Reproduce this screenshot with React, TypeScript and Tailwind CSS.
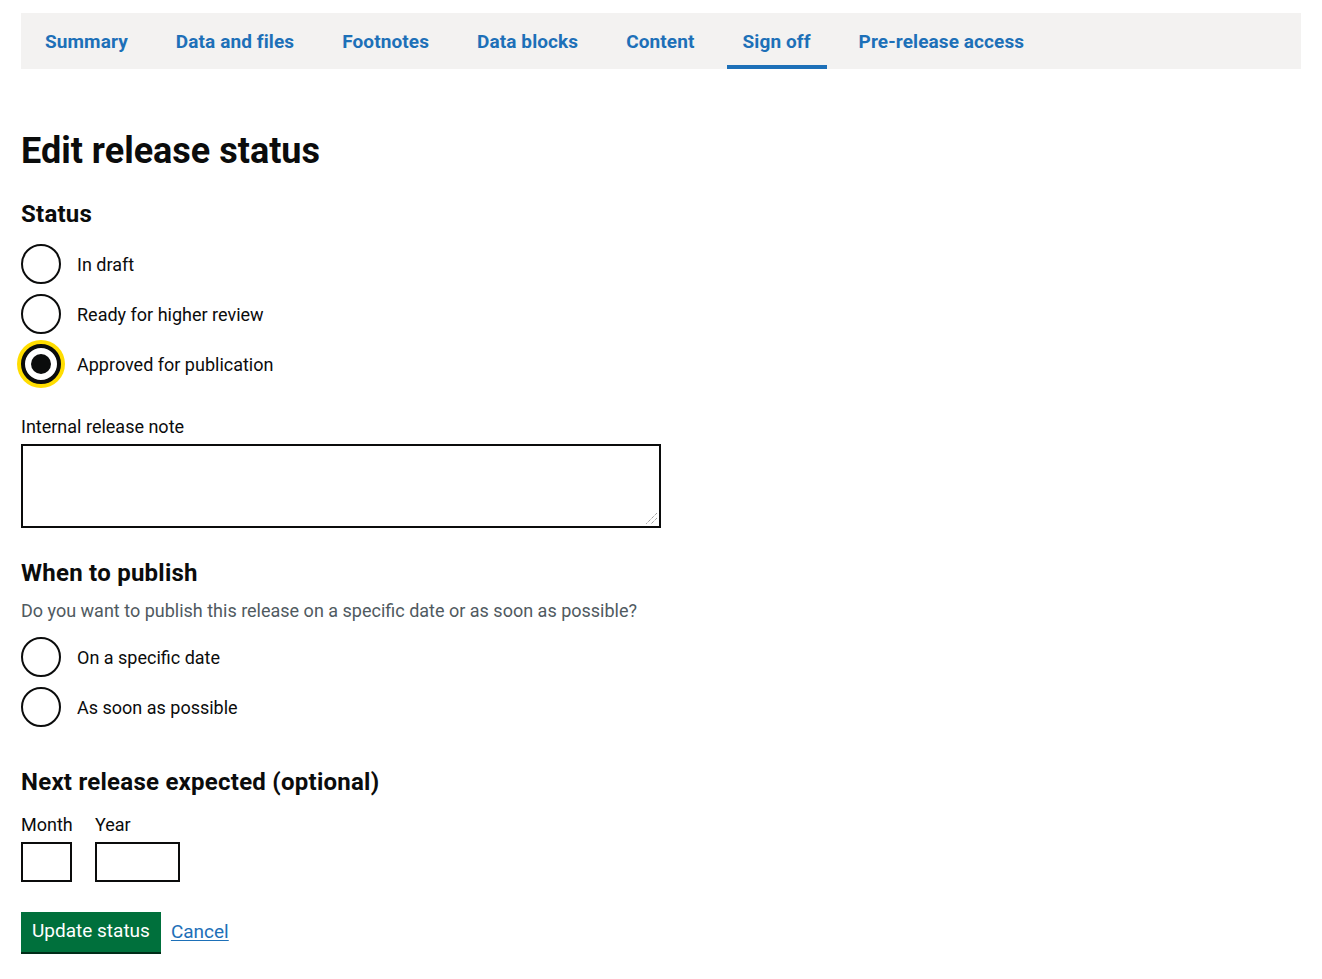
import React from "react";

const tabs = ["Summary", "Data and files", "Footnotes", "Data blocks", "Content", "Sign off", "Pre-release access"];

function Radio({ label, checked = false, focused = false }: { label: string; checked?: boolean; focused?: boolean }) {
  return (
    <label className="flex items-center h-[50px]">
      <span className="relative w-[40px] h-[40px] shrink-0">
        {focused && <span className="absolute -inset-[4px] rounded-full bg-[#ffdd00]" />}
        <span className="absolute inset-0 rounded-full bg-white border-2 border-[#0b0c0c] flex items-center justify-center" style={focused ? { borderWidth: 4 } : undefined}>
          {checked && <span className="w-[20px] h-[20px] rounded-full bg-[#0b0c0c]" />}
        </span>
      </span>
      <span className="ml-[16px] text-[18px] text-[#0b0c0c]">{label}</span>
    </label>
  );
}

export default function App() {
  return (
    <div className="bg-white min-h-[979px] text-[#0b0c0c]" style={{ fontFamily: "Roboto, 'Noto Sans', sans-serif" }}>
      <div className="px-[21px] pt-[13px]">
        <nav className="bg-[#f3f2f1] h-[56px] flex pl-[8px] gap-[16px]">
          {tabs.map((t) => (
            <a
              key={t}
              className={`px-[16px] flex items-center text-[19px] font-bold text-[#1d70b8] tracking-[0.1px] border-b-4 ${t === "Sign off" ? "border-[#1d70b8]" : "border-transparent"} pt-[6px]`}
            >
              {t}
            </a>
          ))}
        </nav>

        <h1 className="mt-[62px] text-[36px] font-bold leading-[40px]">Edit release status</h1>

        <h2 className="mt-[28px] text-[24px] font-bold leading-[30px] tracking-[0.25px]">Status</h2>
        <div className="mt-[10px]">
          <Radio label="In draft" />
          <Radio label="Ready for higher review" />
          <Radio label="Approved for publication" checked focused />
        </div>

        <div className="mt-[25px] text-[18px] leading-[25px]">Internal release note</div>
        <div className="mt-[5px] w-[640px] h-[84px] border-2 border-[#0b0c0c] relative">
          <svg className="absolute right-[1px] bottom-[1px]" width="14" height="14" viewBox="0 0 14 14">
            <path d="M13 2 L2 13 M13 7 L7 13" stroke="#777" strokeWidth="1" strokeDasharray="1 1" />
          </svg>
        </div>

        <h2 className="mt-[30px] text-[24px] font-bold leading-[30px] tracking-[0.25px]">When to publish</h2>
        <div className="mt-[10px] text-[18px] leading-[25px] text-[#505a5f]">Do you want to publish this release on a specific date or as soon as possible?</div>
        <div className="mt-[9px]">
          <Radio label="On a specific date" />
          <Radio label="As soon as possible" />
        </div>

        <h2 className="mt-[35px] text-[24px] font-bold leading-[30px] tracking-[0.25px]">Next release expected (optional)</h2>
        <div className="mt-[15px] flex">
          <div className="flex flex-col w-[74px]">
            <span className="text-[18px] leading-[25px]">Month</span>
            <div className="mt-[5px] w-[51px] h-[40px] border-2 border-[#0b0c0c]" />
          </div>
          <div className="flex flex-col">
            <span className="text-[18px] leading-[25px]">Year</span>
            <div className="mt-[5px] w-[85px] h-[40px] border-2 border-[#0b0c0c]" />
          </div>
        </div>

        <div className="mt-[30px] flex items-center gap-[10px]">
          <button className="bg-[#00703c] text-white text-[19px] h-[40px] px-[11px] shadow-[0_2px_0_#002d18] pb-[1px]">Update status</button>
          <a className="text-[19px] text-[#1d70b8] underline underline-offset-2">Cancel</a>
        </div>
      </div>
    </div>
  );
}
